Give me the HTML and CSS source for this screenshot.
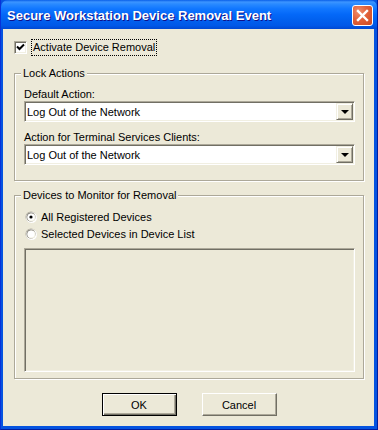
FILE: index.html
```html
<!DOCTYPE html>
<html lang="en">
<head>
    <meta charset="UTF-8">
    <meta name="viewport" content="width=device-width, initial-scale=1.0">
    <title>Secure Workstation Device Removal Event</title>
    <link rel="stylesheet" href="styles.css">
</head>
<body>
    <div class="window">
        <div class="titlebar">
            <span class="title">Secure Workstation Device Removal Event</span>
            <div class="close">
                <svg width="13" height="13" viewBox="0 0 13 13">
                    <path d="M2 2 L11 11 M11 2 L2 11" stroke="#fff" stroke-width="2.4" stroke-linecap="square"/>
                </svg>
            </div>
        </div>

        <div class="client">
            <div class="check-row">
                <span class="checkbox">
                    <svg width="9" height="9" viewBox="0 0 9 9">
                        <path d="M1 3.5 L3.5 6 L8 1.5" fill="none" stroke="#000" stroke-width="2"/>
                    </svg>
                </span>
                <span class="focus-label">Activate Device Removal</span>
            </div>

            <fieldset class="group group-lock">
                <legend>Lock Actions</legend>
                <div class="field-label">Default Action:</div>
                <div class="combo">
                    <span class="combo-text">Log Out of the Network</span>
                    <span class="drop-btn"><span class="arrow"></span></span>
                </div>
                <div class="field-label second">Action for Terminal Services Clients:</div>
                <div class="combo">
                    <span class="combo-text">Log Out of the Network</span>
                    <span class="drop-btn"><span class="arrow"></span></span>
                </div>
            </fieldset>

            <fieldset class="group group-devices">
                <legend>Devices to Monitor for Removal</legend>
                <div class="radio-row">
                    <svg class="radio" width="12" height="12" viewBox="0 0 12 12">
                        <circle cx="6" cy="6" r="5.5" fill="#ACA899"/>
                        <circle cx="6.5" cy="6.5" r="5.5" fill="#fff"/>
                        <circle cx="6" cy="6" r="4.5" fill="#716F64"/>
                        <circle cx="6.5" cy="6.5" r="4" fill="#F1EFE2"/>
                        <circle cx="6" cy="6" r="3.6" fill="#fff"/>
                        <circle cx="6" cy="6" r="1.6" fill="#000"/>
                    </svg>
                    <span>All Registered Devices</span>
                </div>
                <div class="radio-row">
                    <svg class="radio" width="12" height="12" viewBox="0 0 12 12">
                        <circle cx="6" cy="6" r="5.5" fill="#ACA899"/>
                        <circle cx="6.5" cy="6.5" r="5.5" fill="#fff"/>
                        <circle cx="6" cy="6" r="4.5" fill="#716F64"/>
                        <circle cx="6.5" cy="6.5" r="4" fill="#F1EFE2"/>
                        <circle cx="6" cy="6" r="3.6" fill="#fff"/>
                    </svg>
                    <span>Selected Devices in Device List</span>
                </div>
                <div class="listbox"></div>
            </fieldset>

            <div class="buttons">
                <div class="button default"><span>OK</span></div>
                <div class="button"><span>Cancel</span></div>
            </div>
        </div>
    </div>
</body>
</html>
```

FILE: styles.css
```css
body {
    margin: 0;
    padding: 0;
    font-family: "Liberation Sans", Arial, sans-serif;
    font-size: 11px;
    color: #000;
}
.window {
    width: 378px;
    height: 430px;
    box-sizing: border-box;
    display: flex;
    flex-direction: column;
    background: #0553E0;
    border-left: 1px solid #0831D9;
    border-right: 1px solid #001EA0;
    border-bottom: 1px solid #001EA0;
}
.titlebar {
    height: 29px;
    flex: none;
    display: flex;
    align-items: center;
    justify-content: space-between;
    padding: 0 4px 0 6px;
    background: linear-gradient(to bottom, #0A5FE8 0%, #3D95FF 7%, #2A8AFF 14%, #1177FF 30%, #0468F8 50%, #0160EE 70%, #0058E8 88%, #0048D2 100%);
    border-radius: 7px 7px 0 0;
}
.title {
    color: #fff;
    font-weight: bold;
    font-size: 13px;
    text-shadow: 1px 1px 0 #0F1089;
    margin-top: 1px;
}
.close {
    width: 21px;
    height: 21px;
    box-sizing: border-box;
    border: 1px solid #fff;
    border-radius: 3px;
    background: radial-gradient(circle at 30% 30%, #F08F6E 0%, #E2613A 45%, #CC4A22 100%);
    display: flex;
    align-items: center;
    justify-content: center;
    margin-top: 1px;
}
.client {
    flex: 1;
    margin: 0 3px 3px 2px;
    background: #ECE9D8;
    padding: 0 10px 0 11px;
    display: flex;
    flex-direction: column;
}
.check-row {
    display: flex;
    align-items: center;
    margin-top: 10px;
    height: 17px;
}
.checkbox {
    width: 13px;
    height: 13px;
    box-sizing: border-box;
    background: #fff;
    border-style: solid;
    border-width: 1px;
    border-color: #ACA899 #fff #fff #ACA899;
    box-shadow: inset 1px 1px 0 #716F64, inset -1px -1px 0 #F1EFE2;
    display: flex;
    align-items: center;
    justify-content: center;
}
.focus-label {
    margin-left: 4px;
    border: 1px dotted #000;
    padding: 1px 1px 1px 1px;
    line-height: 13px;
}
.group {
    margin: 0;
    width: 350px;
    box-sizing: border-box;
    border: 1px solid #ACA899;
    box-shadow: 1px 1px 0 #fff, inset 1px 1px 0 #fff;
    padding: 0 0 0 9px;
    min-width: 0;
}
.group legend {
    padding: 0 2px;
    margin-left: -3px;
    line-height: 13px;
    background: #ECE9D8;
}
.group-lock {
    margin-top: 11px;
    padding-bottom: 15px;
}
.group-devices {
    margin-top: 8px;
    padding-bottom: 6px;
}
.field-label {
    line-height: 13px;
    margin-top: 8px;
}
.field-label.second {
    margin-top: 9px;
}
.combo {
    width: 331px;
    height: 21px;
    box-sizing: border-box;
    background: #fff;
    border-style: solid;
    border-width: 1px;
    border-color: #ACA899 #fff #fff #ACA899;
    box-shadow: inset 1px 1px 0 #716F64, inset -1px -1px 0 #F1EFE2;
    display: flex;
    align-items: center;
    justify-content: space-between;
    padding: 1px 1px 1px 2px;
}
.drop-btn {
    width: 17px;
    height: 17px;
    box-sizing: border-box;
    background: #ECE9D8;
    border-style: solid;
    border-width: 1px;
    border-color: #F1EFE2 #716F64 #716F64 #F1EFE2;
    box-shadow: inset 1px 1px 0 #fff, inset -1px -1px 0 #ACA899;
    display: flex;
    align-items: center;
    justify-content: center;
}
.arrow {
    width: 0;
    height: 0;
    border-left: 4px solid transparent;
    border-right: 4px solid transparent;
    border-top: 4px solid #000;
    margin-left: 1px;
}
.radio-row {
    display: flex;
    align-items: center;
    height: 17px;
    margin-left: 1px;
}
.radio-row:first-of-type {
    margin-top: 6px;
}
.radio {
    margin-right: 4px;
}
.listbox {
    width: 331px;
    height: 124px;
    box-sizing: border-box;
    margin-top: 6px;
    background: #ECE9D8;
    border-style: solid;
    border-width: 1px;
    border-color: #ACA899 #fff #fff #ACA899;
    box-shadow: inset 1px 1px 0 #716F64, inset -1px -1px 0 #F1EFE2;
}
.buttons {
    display: flex;
    justify-content: center;
    gap: 25px;
    margin-top: 14px;
}
.button {
    width: 75px;
    height: 23px;
    box-sizing: border-box;
    background: #ECE9D8;
    border-style: solid;
    border-width: 1px;
    border-color: #fff #716F64 #716F64 #fff;
    box-shadow: inset -1px -1px 0 #ACA899;
    display: flex;
    align-items: center;
    justify-content: center;
}
.button.default {
    border-color: #000;
    box-shadow: inset 1px 1px 0 #fff, inset -1px -1px 0 #716F64, inset -2px -2px 0 #ACA899;
}
```
